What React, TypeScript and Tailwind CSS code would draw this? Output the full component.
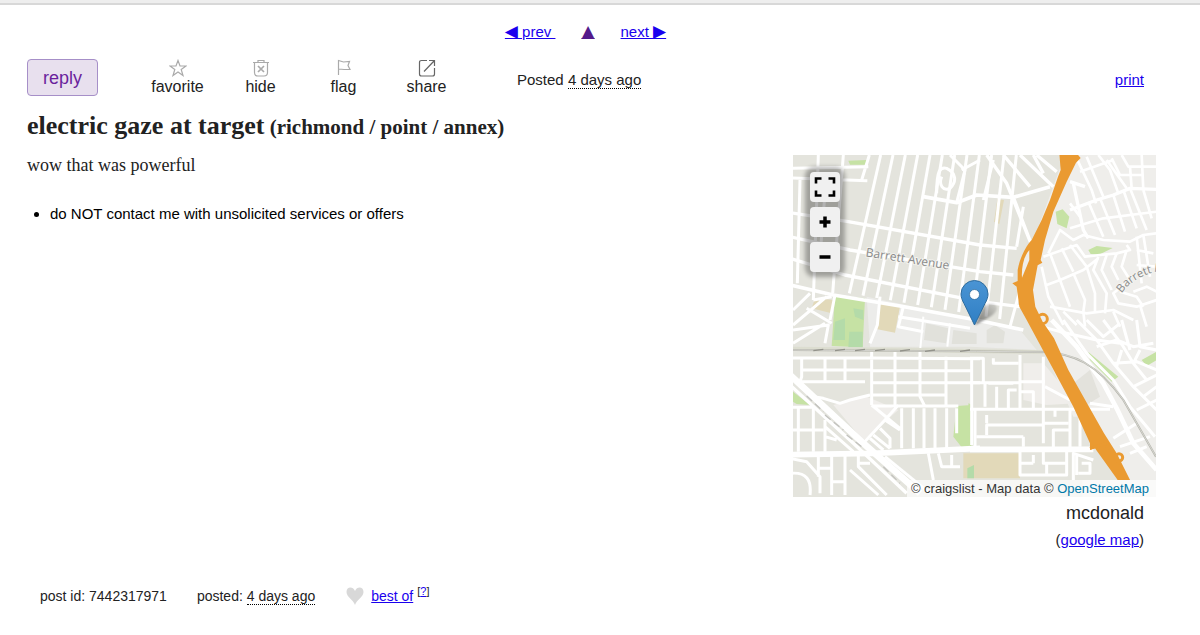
import React, { useState } from 'react';

interface ActionProps {
  label: string;
  children: React.ReactNode;
}

const linkClass = 'text-[#1a00ee] underline';
const timeClass = 'border-b border-dotted border-black';
const arrowClass = "font-['DejaVu_Sans'] text-[17px] leading-none";

function Action({ label, children }: ActionProps) {
  return (
    <button type="button" className="flex w-[83px] cursor-pointer flex-col items-center text-base leading-5 text-[#222]">
      <svg viewBox="0 0 18 18" className="size-[18px]" fill="none" stroke="#aaa" strokeWidth="1.2">
        {children}
      </svg>
      {label}
    </button>
  );
}

// Long streets of the north-west grid, fanning out slightly towards the east
const avenues = Array.from({ length: 12 }, (_, i) => ({
  top: 272 + i * 37,
  bottom: 178 + i * 41,
  end: 430 + i * 7
}));

function MapTiles() {
  return (
    <svg viewBox="9 15 1089 1026" preserveAspectRatio="xMidYMid slice" className="block h-full w-full" aria-hidden="true">
      <rect x="0" y="0" width="1110" height="1050" fill="#e4e4dd" />
      <path d="M830 0H1110V1050H1040L760 560L690 470L720 300Z" fill="#efeeeb" />
      <path d="M230 440L560 510L690 540L740 600L540 590L240 590Z" fill="#ececea" />
      <path d="M130 765L225 738L325 780L220 872Z M700 640H760L860 760L770 765L700 750Z" fill="#f0eeeb" />
      <path d="M770 615L850 625L940 720L980 800H850Z" fill="#efeeeb" />
      <path d="M850 700L900 660L930 740L880 770Z" fill="#e3e2dc" />

      {/* Large buildings south of the grid */}
      <path d="M408 520L475 535L468 580L402 570Z M590 540L615 525L645 545L640 580L590 580Z M490 540L560 550V582H485Z" fill="#e1e1db" />

      {/* Parks and school grounds */}
      <g fill="#c6e2a4">
        <path d="M175 32L232 30V44H180Z M135 435L225 445L218 592L125 588Z M797 185L818 178L838 200L830 235L802 222Z" />
        <path d="M895 300L920 288L968 294L925 315L902 312Z M500 768L545 765L550 885L515 892L490 860Z" />
        <path d="M895 606L985 680L965 695L900 630Z M1055 630L1100 605V630L1070 648Z M9 725L60 765L20 762L9 755Z M535 760L548 765V880L540 890Z" />
      </g>
      <path d="M75 445L130 450L125 490L65 475Z M270 460L330 470L315 548L262 538Z M520 910H690V985H520Z M622 148L642 150L628 222L612 215Z" fill="#e2d9b9" />
      <path d="M135 515L165 505V570H130Z M190 475L220 480V510L195 500Z M178 545H218V592H175Z M532 955L552 945V985H532Z" fill="#b4dba9" />

      <g fill="none" stroke="#fff" strokeWidth="9" strokeLinejoin="round">
        {avenues.map((avenue) => (
          <path key={avenue.top} d={`M${avenue.top} 15L${avenue.bottom} ${avenue.end}`} />
        ))}
        {/* North-west */}
        <path d="M0 55L235 50M0 84L232 92M85 15L70 450M160 15L128 430M238 15L215 90M30 90L22 400M108 90L90 320" />
        <path d="M0 188L175 215L570 285L680 295M0 260L180 300L570 365L670 375M0 325L165 375L570 455L690 470" strokeWidth="10" />
        <path d="M0 405L130 435L330 468L560 510L700 540M400 140L500 158L560 135L670 142L780 110" strokeWidth="11" />
        <path d="M9 480L60 430M9 525L110 440M50 475L125 520M9 540L115 525L105 580M120 510L135 435M70 450L125 440M9 580L105 520M270 440L262 525L240 580M340 470L325 530L400 545M325 500L540 535" />
        <path d="M400 500L390 605M480 520L472 590" strokeWidth="6" />
        <path d="M440 130C440 60 450 50 470 55C500 70 500 95 480 115C460 125 445 105 455 80M480 15L525 60L500 158M515 60L570 30" />
        {/* Streets either side of the freeway */}
        <path d="M590 15L650 100L725 285M640 15L720 110M690 15L790 110M670 142L725 285M730 15L760 70M740 15L800 65" strokeWidth="10" />
        <path d="M700 170L680 290M725 285L690 420L660 530M610 30L580 150" />
      </g>

      {/* Hillside neighbourhood */}
      <g transform="translate(540 0)" fill="none" stroke="#fff" strokeWidth="8" strokeLinejoin="round">
        <path d="M320 25L365 120L378 160M350 20L400 140M385 15L420 60L445 130M410 30L470 115M330 65L430 30M425 25L450 75H520M455 15L475 50H560M515 15L520 120M480 50L485 115" />
        <path d="M300 180L380 150L430 135L480 115L560 118M300 95L345 110M310 100L325 170L340 240L355 265" strokeWidth="10" />
        <path d="M355 155L400 260M390 145L435 255M430 135L465 245M460 120L500 235M480 115L530 240M520 120L545 205M300 235L400 205L560 185M330 200L300 160" />
        <path d="M235 310L270 240L310 270L340 255L400 270L480 275L520 255L560 250M220 320L320 285L345 320L390 315L440 310L480 300L470 285" />
        <path d="M240 310L270 390M275 295L310 365M300 285L350 350M230 405L270 390L340 360L385 325M215 350L235 440L280 525M270 390L300 470M310 370L345 450L340 485M350 350L375 430V485M385 320L370 360L410 430L405 490" />
        <path d="M410 315L395 360L425 420M440 310L425 350L445 390M470 300L455 350L480 390M500 260L515 400M480 390L430 430L445 460L500 470L560 450M520 255L540 380M500 300L550 310M500 345L560 350" />
        <path d="M240 470L350 490L430 480L490 510M280 485L320 525M340 485L345 530M490 425L530 410L560 425M450 425L500 440L520 470M430 485L450 530M510 465L530 530" />
      </g>

      {/* South-west grid */}
      <g transform="translate(0 510)" fill="none" stroke="#fff" strokeWidth="9" strokeLinejoin="round">
        <path d="M0 114H240L570 116M35 115V170L30 185M105 115V185M165 115V185M20 185H225M35 150H245M245 85V255M315 95V260M390 95V230L405 260M468 110V255M245 152H545M245 188H570M245 225H470M545 115V375" />
        <path d="M70 230L100 235L150 250L180 240L240 225M245 255L330 325M245 258H505M325 255L285 300L220 370M285 300L330 330M335 265V385M370 265V385M402 265V385M435 265V385M470 265V385M500 265V340" />
        <path d="M0 262H70M25 265V395M70 265V395M0 330H100M105 300V395M105 350L140 360M105 320L190 395M250 345L300 385M270 325L300 355V385M240 355L280 390" />
        <path d="M0 415L50 425L90 470V520M0 460C50 455 65 480 60 525M85 405V470M125 405V525M165 405V525M205 405V440L290 525M85 445H125M125 485H165M205 430H240M180 450L265 525M415 400L430 480M445 400L455 440H510M485 405V440" />
        <path d="M0 404L250 400L570 385" strokeWidth="17" />
        <path d="M0 165L220 370L390 520" strokeWidth="20" />
        <path d="M0 195L190 370L350 520" strokeWidth="10" />
        <path d="M285 410L420 520" />
        <path d="M50 228L100 275M105 285L160 330M170 345L215 380M280 440L330 490" stroke="#c2c2be" strokeWidth="4" strokeDasharray="22 12" />
      </g>

      {/* South-east grid */}
      <g transform="translate(540 510)" fill="none" stroke="#fff" strokeWidth="9" strokeLinejoin="round">
        <path d="M0 115H40V185M0 188H150M70 115V130H145M150 105V265M150 185H225M220 110V265M220 265V370M45 190V260M55 190H130M80 265V200M115 265V210H140M150 215H190V265M0 268H420M15 270V380M50 345V315H220M50 285V310M20 350H160M160 350V380M250 385V330H300M220 310H295M300 265V385M255 290V265M330 290V380" />
        <path d="M150 385V465H290V385M150 430H190M190 430V405M220 395V430H290M230 465V430M320 400V465M335 430H360V460H325M310 480V400L370 420M225 200L300 240" />
        <path d="M0 388H370" strokeWidth="17" />
        <path d="M245 0L320 80L400 190L440 265L490 370L560 450" strokeWidth="14" />
        <path d="M280 0L350 100L430 180L480 260L555 350M180 10L270 35L380 60L450 70M320 0L380 60L430 130L490 200L560 270" />
        <path d="M350 0L400 50L450 10M400 0L460 80L490 130M455 0L480 90M500 0L510 80L560 90M380 80L440 60L490 80L550 70M430 130L500 125L560 150M455 90L440 140M510 90L490 130L530 180M490 200L560 165M520 230L560 200M500 270L560 240M430 355L500 310M450 380L540 350M480 400L530 380M360 250L430 260" />
      </g>

      {/* Railway */}
      <path d="M0 596L390 600L560 604L760 606" fill="none" stroke="#dcddd0" strokeWidth="12" />
      <path d="M0 600L390 603L560 604L760 606C850 610 920 640 1000 750L1098 920" fill="none" stroke="#b5b5ac" strokeWidth="6" />
      <path d="M0 600L390 603L560 604L760 606C850 610 920 640 1000 750L1098 920" fill="none" stroke="#e6e6e2" strokeWidth="2" />
      <path d="M70 602L100 598M135 602L165 598M195 602L225 598M255 602L285 598M330 603L360 599M405 604L435 600M510 604L540 600" stroke="#92928a" strokeWidth="4" />

      {/* Freeway */}
      <path d="M808 10H860L872 24L858 38L830 95L790 185L765 270L752 330L757 338L743 346L729 420L736 470L758 515L792 565L835 660L897 770L942 850L980 910L1025 1000H990L915 895L900 900V880L850 770L780 640L710 510L688 470L680 410L667 400L683 393L683 360C690 320 710 285 725 270L755 210L780 150L804 80L812 60Z" fill="#ea9a31" />
      <g fill="none" stroke="#ea9a31" strokeWidth="9">
        <circle cx="758" cy="507" r="14" />
        <circle cx="987" cy="922" r="11" />
        <path d="M945 895L990 940M900 895L950 880" />
      </g>
      <path d="M718 300C700 320 694 355 696 383L718 330Z" fill="#f0eeea" />

      <g fill="#8a8a8a" stroke="#f4f4f0" strokeWidth="5" paintOrder="stroke" fontFamily="'Open Sans', sans-serif">
        <text transform="translate(226 319) rotate(9)" fontSize="36">Barrett Avenue</text>
        <path id="barrett-curve" d="M995 430C1015 400 1050 380 1080 370L1180 345" fill="none" stroke="none" />
        <text fontSize="34"><textPath href="#barrett-curve">Barrett A</textPath></text>
      </g>
      <path d="M877 990H1110V1050H877Z" fill="#efeee9" />
    </svg>
  );
}

function MapButton({ label, onClick, children }: ActionProps & { onClick?: () => void }) {
  return (
    <button type="button" aria-label={label} onClick={onClick} className="flex size-[30px] cursor-pointer items-center justify-center rounded bg-[#f0f0f0]">
      <svg viewBox="0 0 24 24" className="size-6" fill="none" stroke="#000" strokeWidth="3">
        {children}
      </svg>
    </button>
  );
}

function MapBox() {
  const [zoom, setZoom] = useState(0);

  return (
    <div className="relative h-[342px] overflow-hidden bg-[#e4e4dd]" data-zoom={zoom}>
      <MapTiles />
      <div className="absolute top-[17px] left-[17px] flex flex-col gap-[5px] rounded-sm bg-black/30 shadow-[0_0_4px_5px_rgba(0,0,0,0.3)]">
        <MapButton label="full screen">
          <path d="M3 8.500V3.500H8.500M15.500 3.500H21V8.500M21 15.500V20.500H15.500M8.500 20.500H3V15.500" strokeWidth="2.600" />
        </MapButton>
        <MapButton label="zoom in" onClick={() => setZoom(zoom + 1)}>
          <path d="M6.500 12H17.500M12 6.500V17.500" strokeWidth="3.500" />
        </MapButton>
        <MapButton label="zoom out" onClick={() => setZoom(zoom - 1)}>
          <path d="M6.500 12H17.500" strokeWidth="3.500" />
        </MapButton>
      </div>
      {/* Marker, with its tip at the middle of the map */}
      <svg viewBox="0 0 50 48" className="absolute top-[124px] left-[166px] h-12 w-[50px]" role="img" aria-label="post location">
        <defs>
          <linearGradient id="pin" x1="0" y1="0" x2="0" y2="1">
            <stop offset="0" stopColor="#4a94d4" />
            <stop offset="1" stopColor="#2f7fc4" />
          </linearGradient>
          <linearGradient id="pin-shadow" x1="0" y1="1" x2="1" y2="0">
            <stop offset="0" stopColor="#000" stopOpacity="0.500" />
            <stop offset="1" stopColor="#000" stopOpacity="0.080" />
          </linearGradient>
          <filter id="soft"><feGaussianBlur stdDeviation="1" /></filter>
        </defs>
        <path d="M16 46L23 30C27 24 36 22 38 28C39 34 30 39 16 46Z" fill="url(#pin-shadow)" filter="url(#soft)" />
        <path d="M15.500 46L5 24.500C3 21 2 18 2 15A13.500 13.500 0 0 1 29 15C29 18 28 21 26 24.500Z" fill="url(#pin)" stroke="#2e6c9e" />
        <circle cx="15.500" cy="15.500" r="5" fill="#fff" stroke="#2e6c9e" strokeWidth="0.800" />
      </svg>
      <p className="absolute right-0 bottom-0 bg-white/70 pr-[7px] pl-1 text-[13px] leading-[17px] text-[#333]">
        © craigslist - Map data © <a href="#osm" className="text-[#0078a8]">OpenStreetMap</a>
      </p>
    </div>
  );
}

export default function App() {
  const [best, setBest] = useState(false);

  return (
    <div className="bg-white font-['Liberation_Sans',Arial,sans-serif] text-[#222]">
      <div className="h-[5px] border-b-2 border-[#d8d8d8] bg-[#eee]" />
      <div className="pr-14 pl-[27px]">
        <nav className="flex h-[37px] items-end justify-center gap-[26px] text-[15px] leading-5 whitespace-pre">
          <a href="#prev" className={linkClass}><span className={arrowClass}>◀</span> prev </a>
          <a href="#top" aria-label="back to list" className="text-[#551a8b] underline"><span className={arrowClass}>▲</span></a>
          <a href="#next" className={linkClass}>next <span className={arrowClass}>▶</span></a>
        </nav>

        <header className="flex items-start pt-[17px]">
          <button type="button" className="mr-[38px] h-[37px] w-[71px] cursor-pointer rounded border border-[#a68fc8] bg-[#e8e0ee] text-lg text-[#6a1f9c]">
            reply
          </button>
          <Action label="favorite">
            <path d="M9 1.500L11 7H17L12.200 10.500L14 16.500L9 13L4 16.500L5.800 10.500L1 7H7Z" />
          </Action>
          <Action label="hide">
            <path d="M1 3.500H17M6 3V1.500H12V3M2.500 4V13.500Q2.500 17 6 17H12Q15.500 17 15.500 13.500V4" />
            <path d="M6 7L12 13M12 7L6 13" strokeWidth="1.700" />
          </Action>
          <Action label="flag">
            <path d="M3.500 16V1.500L8.500 3L14.500 2.500L13 6.500L15 10.500H9L4 10" />
          </Action>
          <Action label="share">
            <path d="M9 1.500H3.500Q1.500 1.500 1.500 3.500V15Q1.500 17 3.500 17H14.500Q16.500 17 16.500 15V9M6 12.500L16 2M11 1.500H16.500V7" stroke="#666" />
          </Action>
          <p className="mt-3 ml-[49px] text-[15px] leading-[18px]">
            Posted <time className={timeClass}>4 days ago</time>
          </p>
          <a href="#print" className={`mt-3 ml-auto text-[15px] leading-[18px] ${linkClass}`}>print</a>
        </header>

        <h1 className="mt-[15px] font-['Liberation_Serif','Times_New_Roman',serif] text-[26px] leading-7 font-bold">
          electric gaze at target<span className="text-[21px]"> (richmond / point / annex)</span>
        </h1>

        <main className="mt-3.5 flex items-start justify-between">
          <section className="flex-1">
            <p className="font-['Liberation_Serif','Times_New_Roman',serif] text-lg leading-5">wow that was powerful</p>
            <ul className="mt-[29px] list-disc pl-[23px] text-[15px] leading-5 text-black">
              <li>do NOT contact me with unsolicited services or offers</li>
            </ul>
          </section>
          <aside className="-mr-3 w-[363px]">
            <MapBox />
            <div className="pr-3 text-right">
              <p className="mt-1 text-lg leading-6">mcdonald</p>
              <p className="mt-[3px] text-[15px] leading-6">(<a href="#map" className={linkClass}>google map</a>)</p>
            </div>
          </aside>
        </main>

        <footer className="mt-[35px] flex items-center pb-7 pl-[13px] text-sm leading-[18px]">
          <p className="mr-[30px]">post id: 7442317971</p>
          <p className="mr-[31px]">posted: <time className={timeClass}>4 days ago</time></p>
          <button type="button" aria-label="nominate for best of" onClick={() => setBest(!best)} className="mr-[7px] cursor-pointer">
            <svg viewBox="0 0 18 18" className="size-[18px]" fill={best ? '#c33' : '#d8d8d8'}>
              <path d="M9 18C7.500 13 0.500 10 0.500 5C0.500 -0.500 7 -1 9 4C11 -1 17.500 -0.500 17.500 5C17.500 10 10.500 13 9 18Z" />
            </svg>
          </button>
          <a href="#best" className={linkClass}>best of</a>
          <sup className="ml-1 text-[11px]">[<a href="#help" className={linkClass}>?</a>]</sup>
        </footer>
      </div>
    </div>
  );
}
